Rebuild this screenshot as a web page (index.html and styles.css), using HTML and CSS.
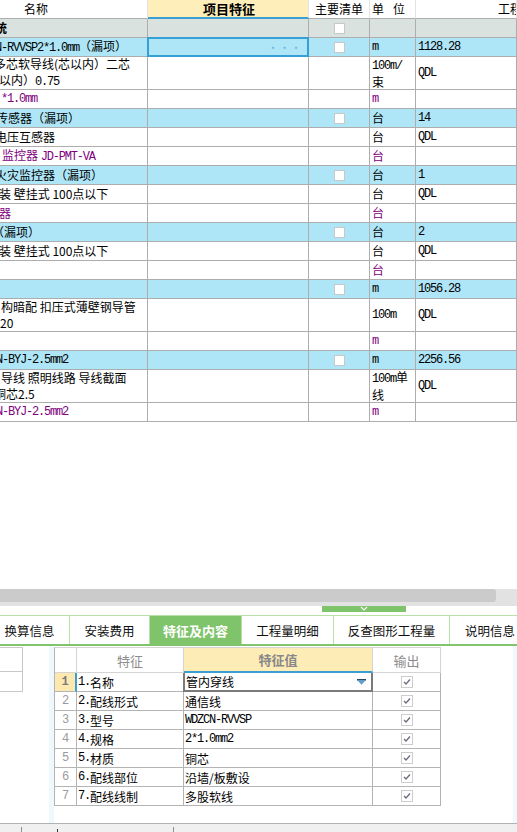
FILE: index.html
```html
<!DOCTYPE html>
<html lang="zh-CN">
<head>
<meta charset="utf-8">
<title>特征及内容</title>
<link rel="stylesheet" href="styles.css">
</head>
<body>
<div class="sheet">
  <div class="row head">
    <div class="c c1"><span class="hname">名称</span></div>
    <div class="c c2">项目特征</div>
    <div class="c c3">主要清单</div>
    <div class="c c4"><span class="hunit">单位</span></div>
    <div class="c c5"><span class="hqty">工程</span></div>
  </div>
  <div class="row cat">
    <div class="c c1"><span class="nm s5">统</span></div>
    <div class="c c2"></div>
    <div class="c c3"><span class="cb"></span></div>
    <div class="c c4"></div>
    <div class="c c5"></div>
  </div>
  <div class="row hl">
    <div class="c c1"><span class="nm s5"><span class="m">N-RVVSP2*1.0mm</span>（漏项）</span></div>
    <div class="c c2 sel"><span class="dots">···</span></div>
    <div class="c c3"><span class="cb"></span></div>
    <div class="c c4"><span class="m">m</span></div>
    <div class="c c5"><span class="m">1128.28</span></div>
  </div>
  <div class="row dbl">
    <div class="c c1"><div class="lines"><div class="nm s6">多芯软导线(芯以内）二芯</div><div class="nm s1">以内）<span class="m">0.75</span></div></div></div>
    <div class="c c2"></div>
    <div class="c c3"></div>
    <div class="c c4"><div class="lines"><span class="m">100m/</span><br>束</div></div>
    <div class="c c5"><span class="m">QDL</span></div>
  </div>
  <div class="row mat">
    <div class="c c1"><span class="nm p1 m">*1.0mm</span></div>
    <div class="c c2"></div>
    <div class="c c3"></div>
    <div class="c c4"><span class="m">m</span></div>
    <div class="c c5"></div>
  </div>
  <div class="row hl">
    <div class="c c1"><span class="nm s4">传感器（漏项）</span></div>
    <div class="c c2"></div>
    <div class="c c3"><span class="cb"></span></div>
    <div class="c c4">台</div>
    <div class="c c5"><span class="m">14</span></div>
  </div>
  <div class="row">
    <div class="c c1"><span class="nm s5">电压互感器</span></div>
    <div class="c c2"></div>
    <div class="c c3"></div>
    <div class="c c4">台</div>
    <div class="c c5"><span class="m">QDL</span></div>
  </div>
  <div class="row mat">
    <div class="c c1"><span class="nm p2">监控器 <span class="m">JD-PMT-VA</span></span></div>
    <div class="c c2"></div>
    <div class="c c3"></div>
    <div class="c c4">台</div>
    <div class="c c5"></div>
  </div>
  <div class="row hl">
    <div class="c c1"><span class="nm s5">火灾监控器（漏项）</span></div>
    <div class="c c2"></div>
    <div class="c c3"><span class="cb"></span></div>
    <div class="c c4">台</div>
    <div class="c c5"><span class="m">1</span></div>
  </div>
  <div class="row">
    <div class="c c1"><span class="nm s1">装 壁挂式 100点以下</span></div>
    <div class="c c2"></div>
    <div class="c c3"></div>
    <div class="c c4">台</div>
    <div class="c c5"><span class="m">QDL</span></div>
  </div>
  <div class="row mat">
    <div class="c c1"><span class="nm s1">器</span></div>
    <div class="c c2"></div>
    <div class="c c3"></div>
    <div class="c c4">台</div>
    <div class="c c5"></div>
  </div>
  <div class="row hl">
    <div class="c c1"><span class="nm s8">（漏项）</span></div>
    <div class="c c2"></div>
    <div class="c c3"><span class="cb"></span></div>
    <div class="c c4">台</div>
    <div class="c c5"><span class="m">2</span></div>
  </div>
  <div class="row">
    <div class="c c1"><span class="nm s1">装 壁挂式 100点以下</span></div>
    <div class="c c2"></div>
    <div class="c c3"></div>
    <div class="c c4">台</div>
    <div class="c c5"><span class="m">QDL</span></div>
  </div>
  <div class="row mat">
    <div class="c c1"></div>
    <div class="c c2"></div>
    <div class="c c3"></div>
    <div class="c c4">台</div>
    <div class="c c5"></div>
  </div>
  <div class="row hl">
    <div class="c c1"></div>
    <div class="c c2"></div>
    <div class="c c3"><span class="cb"></span></div>
    <div class="c c4"><span class="m">m</span></div>
    <div class="c c5"><span class="m">1056.28</span></div>
  </div>
  <div class="row dbl">
    <div class="c c1"><div class="lines"><div class="nm p1">构暗配 扣压式薄壁钢导管</div><div class="nm">20</div></div></div>
    <div class="c c2"></div>
    <div class="c c3"></div>
    <div class="c c4"><span class="m">100m</span></div>
    <div class="c c5"><span class="m">QDL</span></div>
  </div>
  <div class="row mat">
    <div class="c c1"></div>
    <div class="c c2"></div>
    <div class="c c3"></div>
    <div class="c c4"><span class="m">m</span></div>
    <div class="c c5"></div>
  </div>
  <div class="row hl">
    <div class="c c1"><span class="nm s4 m">N-BYJ-2.5mm2</span></div>
    <div class="c c2"></div>
    <div class="c c3"><span class="cb"></span></div>
    <div class="c c4"><span class="m">m</span></div>
    <div class="c c5"><span class="m">2256.56</span></div>
  </div>
  <div class="row dbl">
    <div class="c c1"><div class="lines"><div class="nm p1">导线 照明线路 导线截面</div><div class="nm s6">铜芯2.5</div></div></div>
    <div class="c c2"></div>
    <div class="c c3"></div>
    <div class="c c4"><div class="lines"><span class="m">100m</span>单<br>线</div></div>
    <div class="c c5"><span class="m">QDL</span></div>
  </div>
  <div class="row mat">
    <div class="c c1"><span class="nm s4 m">N-BYJ-2.5mm2</span></div>
    <div class="c c2"></div>
    <div class="c c3"></div>
    <div class="c c4"><span class="m">m</span></div>
    <div class="c c5"></div>
  </div>
</div>

<div class="hscroll"><div class="thumb"></div></div>
<div class="splitter">
  <div class="handle"><svg class="chev" width="8" height="5" viewBox="0 0 8 5"><polyline points="1,1 4,4 7,1" fill="none" stroke="#ffffff" stroke-width="1.2"/></svg></div>
</div>

<div class="tabs">
  <div class="tab t1">换算信息</div>
  <div class="tab t2">安装费用</div>
  <div class="tab t3 on">特征及内容</div>
  <div class="tab t4">工程量明细</div>
  <div class="tab t5">反查图形工程量</div>
  <div class="tab t6">说明信息</div>
</div>

<div class="bottom">
  <div class="lp">
    <div class="lbox"><div class="lr1"></div><div class="lr2"></div></div>
  </div>
  <div class="strip"></div>
  <div class="fp">
    <div class="ft">
      <div class="fr fh">
        <div class="fc rn"></div>
        <div class="fc fn hc">特征</div>
        <div class="fc fv hc hv">特征值</div>
        <div class="fc fo hc">输出</div>
      </div>
      <div class="fr">
        <div class="fc rn rn1">1</div>
        <div class="fc fn"><span class="m">1.</span>名称</div>
        <div class="fc fv edit"><span>管内穿线</span><svg class="dd" width="9" height="6" viewBox="0 0 9 6"><rect x="0" y="0" width="9" height="1.6" fill="#24496b"/><polygon points="0.5,1.6 8.5,1.6 4.5,5.8" fill="#5a9fd6"/></svg></div>
        <div class="fc fo"><span class="ck"><svg width="10" height="10" viewBox="0 0 10 10"><polyline points="2,5 4,7 8,2.5" fill="none" stroke="#6c6c7c" stroke-width="1.3"/></svg></span></div>
      </div>
      <div class="fr">
        <div class="fc rn">2</div>
        <div class="fc fn"><span class="m">2.</span>配线形式</div>
        <div class="fc fv">通信线</div>
        <div class="fc fo"><span class="ck"><svg width="10" height="10" viewBox="0 0 10 10"><polyline points="2,5 4,7 8,2.5" fill="none" stroke="#6c6c7c" stroke-width="1.3"/></svg></span></div>
      </div>
      <div class="fr">
        <div class="fc rn">3</div>
        <div class="fc fn"><span class="m">3.</span>型号</div>
        <div class="fc fv"><span class="m">WDZCN-RVVSP</span></div>
        <div class="fc fo"><span class="ck"><svg width="10" height="10" viewBox="0 0 10 10"><polyline points="2,5 4,7 8,2.5" fill="none" stroke="#6c6c7c" stroke-width="1.3"/></svg></span></div>
      </div>
      <div class="fr">
        <div class="fc rn">4</div>
        <div class="fc fn"><span class="m">4.</span>规格</div>
        <div class="fc fv"><span class="m">2*1.0mm2</span></div>
        <div class="fc fo"><span class="ck"><svg width="10" height="10" viewBox="0 0 10 10"><polyline points="2,5 4,7 8,2.5" fill="none" stroke="#6c6c7c" stroke-width="1.3"/></svg></span></div>
      </div>
      <div class="fr">
        <div class="fc rn">5</div>
        <div class="fc fn"><span class="m">5.</span>材质</div>
        <div class="fc fv">铜芯</div>
        <div class="fc fo"><span class="ck"><svg width="10" height="10" viewBox="0 0 10 10"><polyline points="2,5 4,7 8,2.5" fill="none" stroke="#6c6c7c" stroke-width="1.3"/></svg></span></div>
      </div>
      <div class="fr">
        <div class="fc rn">6</div>
        <div class="fc fn"><span class="m">6.</span>配线部位</div>
        <div class="fc fv">沿墙/板敷设</div>
        <div class="fc fo"><span class="ck"><svg width="10" height="10" viewBox="0 0 10 10"><polyline points="2,5 4,7 8,2.5" fill="none" stroke="#6c6c7c" stroke-width="1.3"/></svg></span></div>
      </div>
      <div class="fr">
        <div class="fc rn">7</div>
        <div class="fc fn"><span class="m">7.</span>配线线制</div>
        <div class="fc fv">多股软线</div>
        <div class="fc fo"><span class="ck"><svg width="10" height="10" viewBox="0 0 10 10"><polyline points="2,5 4,7 8,2.5" fill="none" stroke="#6c6c7c" stroke-width="1.3"/></svg></span></div>
      </div>
    </div>
  </div>
  <div class="strip sr"></div>
</div>

<div class="status">
  <span class="sep sp1"></span>
  <span class="sep sp2"></span>
  <span class="sep sp3"></span>
</div>
</body>
</html>
```

FILE: styles.css
```css
* { box-sizing: border-box; margin: 0; padding: 0; }
html, body { width: 517px; height: 832px; overflow: hidden; background: #ffffff; }
body {
  font-family: "Noto Sans CJK SC", "Noto Sans", sans-serif;
  font-size: 12px;
  color: #000000;
  display: flex;
  flex-direction: column;
}

/* ---------- top grid ---------- */
.sheet { height: 589px; flex: none; overflow: hidden; }
.row { display: grid; grid-template-columns: 148px 161px 61px 46px 1fr; height: 19px; }
.row.dbl { height: 33px; }
.c {
  border-right: 1px solid #adadad;
  border-bottom: 1px solid #adadad;
  display: flex;
  align-items: center;
  overflow: hidden;
  white-space: nowrap;
  padding-left: 2px;
  line-height: 16px;
}
.c1 { padding-left: 0; }
.c3 { justify-content: center; padding-left: 0; }
.m { font-family: "Liberation Mono", monospace; letter-spacing: -1.2px; }
.nm { display: block; white-space: nowrap; }
.s1 { margin-left: -1px; }
.s4 { margin-left: -4px; }
.s5 { margin-left: -5px; }
.s6 { margin-left: -6px; }
.s8 { margin-left: -8px; }
.p1 { margin-left: 1px; }
.p2 { margin-left: 2px; }
.lines { line-height: 16px; }

.head .c { border-right-color: #e3e3e3; line-height: 18px; font-size: 12px; }
.head .c2 {
  background: #fdeeba;
  border-bottom: 2px solid #3b9fd4;
  justify-content: center;
  font-weight: bold;
  font-size: 13px;
}
.hname { margin-left: 24px; }
.hunit { letter-spacing: 9px; }
.hqty { margin-left: 80px; }

.cat { background: #dae2df; }
.cat .c1 { font-weight: bold; }
.hl { background: #afe6f7; }
.mat { color: #800080; }

.sel {
  border: 2px solid #36a0d5;
  margin: -1px 0 0 -1px;
  justify-content: flex-end;
  padding-right: 5px;
}
.dots { color: #6cb8e4; font-size: 11px; letter-spacing: 0.5px; }

.cb {
  width: 11px;
  height: 11px;
  border: 1px solid #c8c8c8;
  background: #ffffff;
  display: block;
}

/* ---------- scrollbar + splitter ---------- */
.hscroll { height: 17px; flex: none; background: #e2e2e2; }
.thumb { width: 496px; height: 13px; background: #cbcbcb; border-radius: 0 3px 3px 0; }
.splitter { height: 9px; flex: none; display: flex; }
.handle {
  margin-left: 322px;
  width: 84px;
  height: 6px;
  background: #7fc36b;
  display: flex;
  justify-content: center;
  align-items: flex-start;
}
.chev { display: block; }

/* ---------- tabs ---------- */
.tabs {
  display: flex;
  height: 31px;
  flex: none;
  border-top: 1px solid #b9e0a8;
  border-bottom: 2px solid #82c46e;
}
.tab {
  flex: none;
  border-right: 1px solid #b9e0a8;
  display: flex;
  align-items: center;
  justify-content: center;
  font-size: 12.5px;
  color: #111111;
  white-space: nowrap;
}
.t1 { width: 70px; padding-right: 10px; }
.t2 { width: 80px; }
.t3 { width: 92px; }
.t4 { width: 92px; }
.t5 { width: 116px; }
.t6 { width: 80px; border-right: none; }
.on { background: #7fc36b; color: #ffffff; font-weight: bold; font-size: 13px; }

/* ---------- bottom panel ---------- */
.bottom { height: 177px; flex: none; display: flex; }
.lp { width: 49px; flex: none; padding-top: 1px; }
.lbox { width: 23px; border: 1px solid #c8c8c8; border-left: none; }
.lr1 { height: 24px; border-bottom: 1px solid #c8c8c8; }
.lr2 { height: 19px; }
.strip { width: 5px; flex: none; background: #eff9fd; }
.strip.sr { width: 4px; }
.fp { flex: 1; padding-top: 1px; }

.ft { width: 387px; border-left: 1px solid #b4b4b4; border-top: 1px solid #d4d4d4; }
.fr { display: grid; grid-template-columns: 22px 107px 189px 68px; height: 19px; }
.fr.fh { height: 25px; }
.fc {
  border-right: 1px solid #b4b4b4;
  border-bottom: 1px solid #b4b4b4;
  display: flex;
  align-items: center;
  white-space: nowrap;
  overflow: hidden;
  padding-left: 1px;
  font-size: 12px;
}
.fh .fc { border-color: #d4d4d4; }
.hc { justify-content: center; color: #8c8c8c; font-size: 13px; padding-left: 0; }
.fh .hv { background: #fdecb6; border-bottom: 2px solid #3b9fd4; font-weight: bold; color: #888888; }
.rn { justify-content: center; color: #9a9a9a; padding-left: 0; font-family: "Liberation Mono", monospace; }
.rn1 { background: #fde9b0; color: #7a7a7a; font-weight: bold; border-right: 2px solid #3b9fd4; }
.edit {
  border: 2px solid #7a7a7a;
  border-top: none;
  margin-left: -1px;
  justify-content: space-between;
  padding-right: 5px;
  padding-left: 1px;
}
.dd { display: block; }
.fo { justify-content: center; padding-left: 0; }
.ck {
  width: 12px;
  height: 12px;
  border: 1px solid #cdcdcd;
  background: #ffffff;
  display: flex;
  align-items: center;
  justify-content: center;
}

/* ---------- status ---------- */
.status {
  height: 9px;
  flex: none;
  border-top: 1px solid #b2b2b2;
  background: #f0f0f0;
  display: flex;
  align-items: flex-end;
}
.sep { display: block; width: 1px; background: #8e8e8e; }
.sp1 { margin-left: 21px; height: 5px; }
.sp2 { margin-left: 35px; height: 3px; background: #333333; }
.sp3 { margin-left: 115px; height: 5px; }
```
